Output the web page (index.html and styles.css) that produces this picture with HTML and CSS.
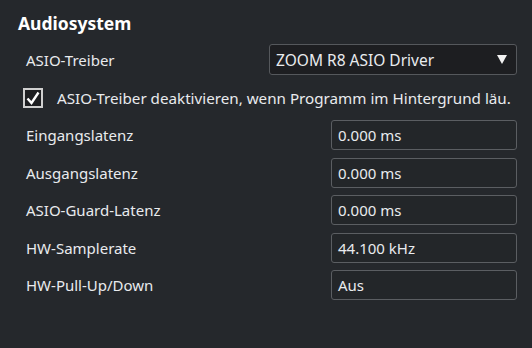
FILE: index.html
```html
<!DOCTYPE html>
<html lang="de">
<head>
<meta charset="utf-8" />
<title>Audiosystem</title>
<link rel="stylesheet" href="styles.css">
</head>
<body>
  <div class="panel">
    <h2 class="title">Audiosystem</h2>

    <div class="row row-driver">
      <span class="label">ASIO-Treiber</span>
      <div class="select">
        <span>ZOOM R8 ASIO Driver</span>
        <span class="arrow"></span>
      </div>
    </div>

    <label class="check-row">
      <span class="checkbox">
        <svg width="14" height="14" viewBox="0 0 14 14">
          <path d="M1.5 7.5 L5.5 12 L12.5 1.5" />
        </svg>
      </span>
      <span class="check-text">ASIO-Treiber deaktivieren, wenn Programm im Hintergrund läu.</span>
    </label>

    <div class="fields">
      <div class="row">
        <span class="label">Eingangslatenz</span>
        <div class="field">0.000 ms</div>
      </div>
      <div class="row">
        <span class="label">Ausgangslatenz</span>
        <div class="field">0.000 ms</div>
      </div>
      <div class="row">
        <span class="label">ASIO-Guard-Latenz</span>
        <div class="field">0.000 ms</div>
      </div>
      <div class="row">
        <span class="label">HW-Samplerate</span>
        <div class="field">44.100 kHz</div>
      </div>
      <div class="row">
        <span class="label">HW-Pull-Up/Down</span>
        <div class="field">Aus</div>
      </div>
    </div>
  </div>
</body>
</html>
```

FILE: styles.css
```css
body {
    margin: 0;
    background: #25282c;
    color: #e9ebee;
    font-family: "Noto Sans", sans-serif;
    font-size: 15px;
}

.panel {
    padding: 12px 15px 0 18px;
}

.title {
    margin: 0;
    font-size: 17.5px;
    line-height: 22px;
    font-weight: bold;
    color: #ffffff;
}

.row {
    display: flex;
    align-items: center;
    justify-content: space-between;
    padding-left: 8px;
}

.row-driver {
    margin-top: 10px;
}

.select {
    width: 248px;
    height: 31px;
    box-sizing: border-box;
    display: flex;
    align-items: center;
    justify-content: space-between;
    padding: 0 9px 0 6px;
    background: #1d1e21;
    border: 1px solid #55585c;
    border-radius: 3px;
    font-size: 15.5px;
}

.arrow {
    width: 0;
    height: 0;
    border-left: 5px solid transparent;
    border-right: 5px solid transparent;
    border-top: 9px solid #f2f2f2;
}

.check-row {
    display: flex;
    align-items: center;
    gap: 14px;
    margin-top: 13px;
    padding-left: 5px;
    height: 20px;
}

.check-text {
    font-size: 15.2px;
}

.checkbox {
    width: 20px;
    height: 20px;
    box-sizing: border-box;
    border: 2px solid #d0d0d0;
    display: flex;
    align-items: center;
    justify-content: center;
    background: #1d1e21;
}

.checkbox path {
    fill: none;
    stroke: #ffffff;
    stroke-width: 2.4;
}

.fields {
    margin-top: 12px;
    display: flex;
    flex-direction: column;
    gap: 7.5px;
}

.field {
    width: 186px;
    height: 30px;
    box-sizing: border-box;
    display: flex;
    align-items: center;
    padding-left: 6px;
    background: #232629;
    border: 1px solid #5b5e62;
    border-radius: 3px;
}
```
